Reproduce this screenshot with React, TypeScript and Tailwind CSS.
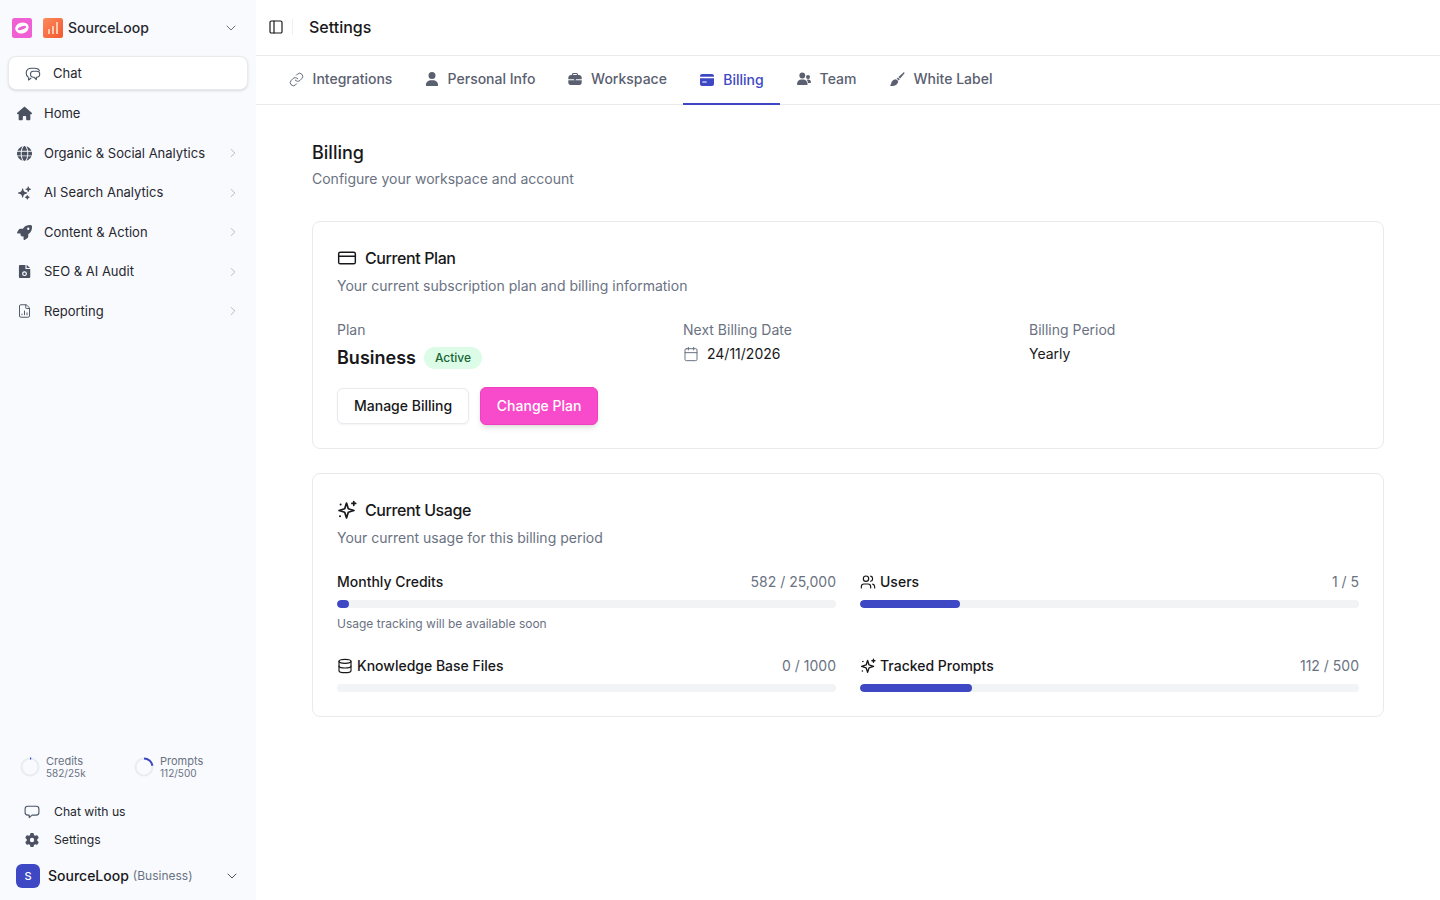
import { ChevronDown, ChevronRight, CreditCard, Calendar, Database, FileChartColumn, Link as LinkIcon, PanelLeft, Users } from 'lucide-react';
import { FaGear, FaGlobe, FaHouse, FaRocket, FaUser } from 'react-icons/fa6';
import { HiSparkles } from 'react-icons/hi2';

const ChatIcon = ({ className }: { className?: string }) => (
  <svg viewBox="0 0 16 16" fill="none" stroke="currentColor" strokeWidth="1.1" strokeLinejoin="round" className={className}>
    <path d="M3.600 11.600C2.100 10.600 1.200 9 1.200 7.200 1.200 4.200 3.200 2.200 6.600 2.200h3c2.700 0 4.600 1.200 5 3" />
    <path d="M3.600 11.600V14l2.600-2" />
    <path d="M5.500 8c0-1.700 1.300-2.800 3-2.800h3.200c1.700 0 3 1.100 3 2.800s-1.300 3.200-3 3.200h-.4v2.400l-2.400-2.400H8.500C6.800 11.200 5.500 9.700 5.500 8Z" />
  </svg>
);

const BubbleIcon = ({ className }: { className?: string }) => (
  <svg viewBox="0 0 16 16" fill="none" stroke="currentColor" strokeWidth="1.1" strokeLinejoin="round" className={className}>
    <path d="M3.800 2.300h8.400c1.500 0 2.700 1.100 2.700 2.600v3.600c0 1.500-1.200 2.600-2.700 2.600H8.100l-2.900 2.500v-2.500H3.800c-1.500 0-2.700-1.100-2.700-2.600V4.900c0-1.500 1.200-2.600 2.700-2.600Z" />
  </svg>
);

const SparkOutline = ({ className }: { className?: string }) => (
  <svg viewBox="0 0 20 20" fill="none" stroke="currentColor" strokeWidth="1.7" strokeLinecap="round" strokeLinejoin="round" className={className}>
    <path d="M9.500 3L11.300 8.700 17 10.500 11.300 12.300 9.500 18 7.700 12.300 2 10.500 7.700 8.700Z" />
    <path d="M16.800 1.500v3.800M14.900 3.400h3.800" />
    <circle cx="3" cy="16.300" r="1" fill="currentColor" stroke="none" />
    <circle cx="3.600" cy="4.400" r="1" fill="currentColor" stroke="none" />
  </svg>
);

const AuditIcon = ({ className }: { className?: string }) => (
  <svg viewBox="0 0 14 16" className={className}>
    <path d="M2 1h6v4.200h5.200V14c0 .6-.4 1-1 1H2c-.6 0-1-.4-1-1V2c0-.6.4-1 1-1Z" fill="currentColor" />
    <path d="M9.300.8l3.700 3.500H9.300Z" fill="currentColor" />
    <circle cx="7" cy="10.300" r="2" fill="none" stroke="#fff" strokeWidth="1.300" />
  </svg>
);

const BriefcaseIcon = ({ className }: { className?: string }) => (
  <svg viewBox="0 0 14 14" className={className}>
    <path d="M4.500 3.500V2.600c0-.7.500-1.100 1.100-1.100h2.800c.6 0 1.100.4 1.100 1.100v.9" fill="none" stroke="currentColor" strokeWidth="1.200" />
    <path d="M.3 7.200V5.800C.3 4.300 1.500 3 3 3h8c1.500 0 2.700 1.300 2.700 2.800v1.400Z" fill="currentColor" />
    <path d="M.3 8.200v2.600C.3 12 1.300 13 2.500 13h9c1.200 0 2.200-1 2.200-2.200V8.200Z" fill="currentColor" />
    <circle cx="7" cy="7.700" r="1" fill="currentColor" />
  </svg>
);

const CardSolid = ({ className }: { className?: string }) => (
  <svg viewBox="0 0 14 12" className={className}>
    <path d="M2 0h10c1.100 0 2 .9 2 2v.8H0V2C0 .9.9 0 2 0Z" fill="currentColor" />
    <path d="M0 4.200h14V10c0 1.100-.9 2-2 2H2c-1.100 0-2-.9-2-2Z" fill="currentColor" />
    <rect x="2.200" y="7.400" width="4.600" height="1.200" rx=".5" fill="#fff" />
  </svg>
);

const TeamIcon = ({ className }: { className?: string }) => (
  <svg viewBox="0 0 14 14" fill="currentColor" className={className}>
    <circle cx="5.300" cy="3.500" r="2.900" />
    <path d="M0 12.200C0 9.500 2 7.500 4.400 7.500h1.800c2.400 0 4.400 2 4.400 4.700 0 .5-.3.800-.8.800H.8c-.5 0-.8-.3-.8-.8Z" />
    <circle cx="11" cy="5" r="2" />
    <path d="M9.800 7.800c.3-.2.700-.3 1.200-.3h.4c1.500 0 2.600 1.300 2.600 2.800 0 .4-.2.700-.6.700h-2.300c-.2-1.200-.7-2.300-1.300-3.200Z" />
  </svg>
);

const BrushIcon = ({ className }: { className?: string }) => (
  <svg viewBox="0 0 16 16" fill="currentColor" className={className}>
    <path d="M15.200.5c.4.300.4.800.1 1.200L10.800 7 9 5.300 14.100.7c.3-.3.800-.5 1.100-.2Z" />
    <path d="M8.400 5.900l2 1.900-1 1.200-2.200-2.100Z" />
    <path d="M6.500 7.600l2.200 2.100c-.1 2.900-2.400 5-5.600 5.100H.7c-.5 0-.6-.5-.3-.8 1-.9.800-2.100 1.400-3.500.7-1.600 2.600-2.800 4.700-2.900Z" />
  </svg>
);

const navItems = [
  { label: 'Home', icon: <FaHouse className="w-[15px] h-[15px]" />, arrow: false },
  { label: 'Organic & Social Analytics', icon: <FaGlobe className="w-[15px] h-[15px]" />, arrow: true },
  { label: 'AI Search Analytics', icon: <HiSparkles className="w-4 h-4" />, arrow: true },
  { label: 'Content & Action', icon: <FaRocket className="w-[15px] h-[15px]" />, arrow: true },
  { label: 'SEO & AI Audit', icon: <AuditIcon className="w-[13px] h-[15px]" />, arrow: true },
  { label: 'Reporting', icon: <FileChartColumn className="w-4 h-4" strokeWidth={1.5} />, arrow: true },
];

const tabs = [
  { label: 'Integrations', icon: <LinkIcon className="w-[15px] h-[15px]" strokeWidth={1.5} />, width: 'w-[136px]' },
  { label: 'Personal Info', icon: <FaUser className="w-3.5 h-3.5" />, width: 'w-[143px]' },
  { label: 'Workspace', icon: <BriefcaseIcon className="w-3.5 h-3.5" />, width: 'w-[132px]' },
  { label: 'Billing', icon: <CardSolid className="w-3.5 h-3" />, width: 'w-[97px]', active: true },
  { label: 'Team', icon: <TeamIcon className="w-3.5 h-3.5" />, width: 'w-[92px]' },
  { label: 'White Label', icon: <BrushIcon className="w-[15px] h-[15px]" />, width: 'w-[137px]' },
];

const usage = [
  { label: 'Monthly Credits', value: '582 / 25,000', pct: 2.33, note: 'Usage tracking will be available soon' },
  { label: 'Users', value: '1 / 5', pct: 20, icon: <Users className="w-4 h-4" strokeWidth={1.75} /> },
  { label: 'Knowledge Base Files', value: '0 / 1000', pct: 0, icon: <Database className="w-4 h-4" strokeWidth={1.75} /> },
  { label: 'Tracked Prompts', value: '112 / 500', pct: 22.4, icon: <SparkOutline className="w-4 h-4" /> },
];

const Ring = ({ pct }: { pct: number }) => (
  <svg width="20" height="20" viewBox="0 0 20 20" className="-rotate-90 shrink-0">
    <circle cx="10" cy="10" r="8.5" fill="none" stroke="#e9ecf0" strokeWidth="2" />
    <circle cx="10" cy="10" r="8.5" fill="none" stroke="#3f48c4" strokeWidth="2" strokeDasharray={`${(pct / 100) * 53.4} 53.4`} />
  </svg>
);

const Sidebar = () => (
  <aside className="w-64 shrink-0 h-screen bg-[#f8fafd] flex flex-col">
    <div className="h-14 flex items-center pl-3 pr-[17px]">
      <svg width="20" height="20" viewBox="0 0 20 20" className="shrink-0">
        <rect width="20" height="20" rx="2.5" fill="#f05fd4" />
        <ellipse cx="10" cy="10" rx="6.8" ry="5.400" transform="rotate(-15 10 10)" fill="#fff" />
        <ellipse cx="10" cy="10" rx="4.400" ry="1.500" transform="rotate(-20 10 10)" fill="#f05fd4" />
      </svg>
      <svg width="20" height="20" viewBox="0 0 20 20" className="ml-[11px] shrink-0">
        <defs>
          <linearGradient id="orange" x1="0" y1="0" x2="1" y2="1">
            <stop offset="0" stopColor="#fb8a5c" />
            <stop offset="1" stopColor="#f4572f" />
          </linearGradient>
        </defs>
        <rect width="20" height="20" rx="2.5" fill="url(#orange)" />
        <rect x="5" y="11" width="2" height="5" fill="#ffc9ae" />
        <rect x="9" y="8" width="2" height="8" fill="#ffc9ae" />
        <rect x="13" y="4" width="2" height="12" fill="#ffc9ae" />
      </svg>
      <span className="ml-[5px] text-sm font-medium text-[#27272f]">SourceLoop</span>
      <ChevronDown className="w-4 h-4 ml-auto text-gray-500" strokeWidth={1.5} />
    </div>
    <div className="mx-2 h-[34px] flex items-center bg-white border border-[#e8eaee] rounded-lg shadow-sm pl-4 pt-px">
      <ChatIcon className="w-4 h-4 text-gray-600" />
      <span className="ml-3 text-[13px] text-[#27272f]">Chat</span>
    </div>
    <nav className="mt-1">
      {navItems.map((item) => (
        <div key={item.label} className="h-[39.5px] flex items-center pl-[17px] pr-4 text-[#4b5160]">
          <span className="w-[15px] flex justify-center">{item.icon}</span>
          <span className="ml-3 text-[13px] text-[#27272f]">{item.label}</span>
          {item.arrow && <ChevronRight className="w-3.5 h-3.5 ml-auto text-gray-400" strokeWidth={1.25} />}
        </div>
      ))}
    </nav>
    <div className="mt-auto">
      <div className="flex items-center pl-5">
        <div className="w-[114px] flex items-center gap-1.5">
          <Ring pct={2.33} />
          <div className="text-[11px] leading-3 text-gray-500">
            <div>Credits</div>
            <div className="text-[10px]">582/25k</div>
          </div>
        </div>
        <div className="flex items-center gap-1.5">
          <Ring pct={22.4} />
          <div className="text-[11px] leading-3 text-gray-500">
            <div>Prompts</div>
            <div className="text-[10px]">112/500</div>
          </div>
        </div>
      </div>
      <div className="mt-[21px] flex flex-col gap-1 pl-6">
        <div className="h-6 flex items-center text-[12.2px] text-[#27272f]">
          <BubbleIcon className="w-4 h-4 text-gray-600" />
          <span className="ml-3.5">Chat with us</span>
        </div>
        <div className="h-6 flex items-center text-[12.2px] text-[#27272f]">
          <span className="w-4 flex justify-center"><FaGear className="w-3.5 h-3.5 text-[#4b5160]" /></span>
          <span className="ml-3.5">Settings</span>
        </div>
      </div>
      <div className="h-12 flex items-center pl-4 pr-4">
        <div className="w-6 h-6 rounded-md bg-[#3f48c4] text-white text-[11px] font-medium flex items-center justify-center">S</div>
        <span className="ml-2 text-sm font-medium text-[#18181b]">SourceLoop</span>
        <span className="ml-1 text-xs text-gray-500">(Business)</span>
        <ChevronDown className="w-4 h-4 ml-auto text-gray-600" strokeWidth={1.5} />
      </div>
    </div>
  </aside>
);

const Billing = () => (
  <div className="px-14 pt-9">
    <h1 className="text-lg leading-6 font-medium text-[#18181b]">Billing</h1>
    <p className="mt-1 text-sm leading-5 text-gray-500">Configure your workspace and account</p>

    <section className="mt-8 border border-[#e8eaee] rounded-lg p-6 h-[228px]">
      <div className="flex items-center gap-2 h-6">
        <CreditCard className="w-5 h-5 text-[#18181b]" strokeWidth={1.75} />
        <h2 className="text-base font-medium tracking-tight text-[#18181b]">Current Plan</h2>
      </div>
      <p className="mt-1.5 text-sm leading-5 text-gray-500">Your current subscription plan and billing information</p>
      <div className="mt-6 grid grid-cols-3 gap-4">
        <div>
          <div className="text-sm leading-5 text-gray-500">Plan</div>
          <div className="mt-1 flex items-center gap-2">
            <span className="text-lg leading-7 font-semibold text-[#18181b]">Business</span>
            <span className="px-[11px] h-[22px] flex items-center rounded-full bg-[#dcfce7] text-xs font-medium text-[#166534]">Active</span>
          </div>
        </div>
        <div>
          <div className="text-sm leading-5 text-gray-500">Next Billing Date</div>
          <div className="mt-1 flex items-center gap-2 text-sm leading-5 text-[#18181b]">
            <Calendar className="w-4 h-4 text-gray-500" strokeWidth={1.5} />
            24/11/2026
          </div>
        </div>
        <div>
          <div className="text-sm leading-5 text-gray-500">Billing Period</div>
          <div className="mt-1 text-sm leading-5 text-[#18181b]">Yearly</div>
        </div>
      </div>
      <div className="mt-[15px] flex items-center gap-[11px]">
        <button className="h-9 px-4 rounded-md border border-[#e8eaee] bg-white shadow-xs text-sm font-medium text-[#18181b]">Manage Billing</button>
        <button className="h-[38px] w-[118px] rounded-md bg-[#f84bcb] border border-[#f13fc2] shadow-md text-sm font-medium text-white">Change Plan</button>
      </div>
    </section>

    <section className="mt-6 border border-[#e8eaee] rounded-lg p-6 h-[244px]">
      <div className="flex items-center gap-2 h-6">
        <SparkOutline className="w-5 h-5 text-[#18181b]" />
        <h2 className="text-base font-medium tracking-tight text-[#18181b]">Current Usage</h2>
      </div>
      <p className="mt-1.5 text-sm leading-5 text-gray-500">Your current usage for this billing period</p>
      <div className="mt-6 grid grid-cols-2 gap-x-6 auto-rows-[84px]">
        {usage.map((u) => (
          <div key={u.label}>
            <div className="flex items-center h-5 text-sm">
              {u.icon && <span className="mr-1 text-[#18181b]">{u.icon}</span>}
              <span className="font-medium text-[#18181b]">{u.label}</span>
              <span className="ml-auto text-gray-500">{u.value}</span>
            </div>
            <div className="mt-2 h-2 rounded-full bg-[#f1f3f5] overflow-hidden">
              <div className="h-full rounded-full bg-[#3f48c4]" style={{ width: `${u.pct}%` }} />
            </div>
            {u.note && <p className="mt-2 text-xs leading-4 text-gray-500">{u.note}</p>}
          </div>
        ))}
      </div>
    </section>
  </div>
);

export default function App() {
  return (
    <div className="flex h-screen overflow-hidden bg-white font-['Inter',sans-serif]">
      <Sidebar />
      <main className="flex-1 min-w-0">
        <header className="h-14 border-b border-[#e8eaee] flex items-center pl-[12px] pb-px">
          <PanelLeft className="w-4 h-4 text-[#18181b]" strokeWidth={1.75} />
          <div className="ml-2 w-px h-4 bg-[#eeeff2]" />
          <span className="ml-4 text-base font-medium text-[#18181b]">Settings</span>
        </header>
        <div className="h-[49px] border-b border-[#e8eaee] flex pl-4">
          {tabs.map((t) => (
            <div
              key={t.label}
              className={`${t.width} h-[49px] pl-px flex items-center justify-center gap-[9px] text-sm font-medium ${
                t.active ? 'text-[#3f48c4] border-b-2 border-[#3f48c4]' : 'text-[#5a6070] pb-[3px]'
              }`}
            >
              {t.icon}
              {t.label}
            </div>
          ))}
        </div>
        <Billing />
      </main>
    </div>
  );
}
